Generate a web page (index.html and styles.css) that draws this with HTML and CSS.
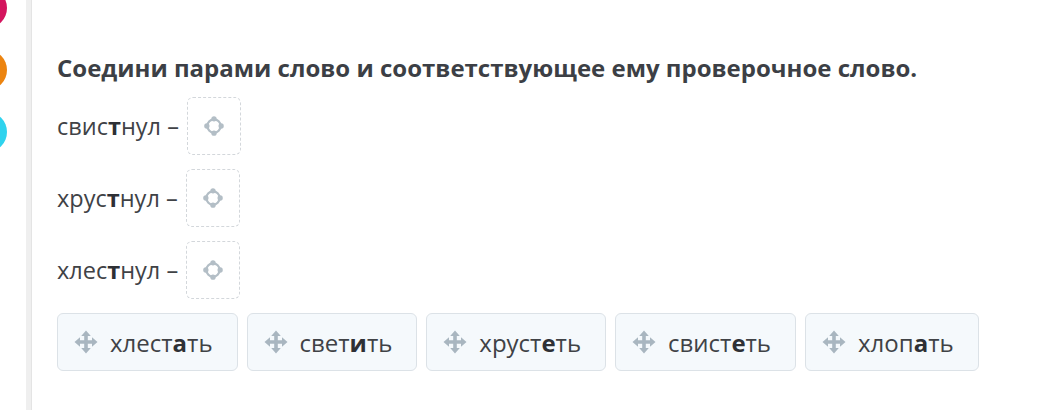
FILE: index.html
```html
<!DOCTYPE html>
<html lang="ru">
<head>
<meta charset="utf-8">
<link rel="stylesheet" href="styles.css">
</head>
<body>
<div class="page">
  <aside class="rail">
    <span class="dot dot-pink"></span>
    <span class="dot dot-orange"></span>
    <span class="dot dot-cyan"></span>
  </aside>
  <main class="content">
    <h1 class="title">Соедини парами слово и соответствующее ему проверочное слово.</h1>
    <div class="rows">
      <div class="row"><span class="word">свис<b>т</b>нул –</span><div class="drop"><svg class="target" viewBox="0 0 20 20"><circle cx="10" cy="10" r="6" /><circle class="knob" cx="10" cy="3.5" r="2.4"/><circle class="knob" cx="10" cy="16.5" r="2.4"/><circle class="knob" cx="3.5" cy="10" r="2.4"/><circle class="knob" cx="16.5" cy="10" r="2.4"/></svg></div></div>
      <div class="row"><span class="word">хрус<b>т</b>нул –</span><div class="drop"><svg class="target" viewBox="0 0 20 20"><circle cx="10" cy="10" r="6" /><circle class="knob" cx="10" cy="3.5" r="2.4"/><circle class="knob" cx="10" cy="16.5" r="2.4"/><circle class="knob" cx="3.5" cy="10" r="2.4"/><circle class="knob" cx="16.5" cy="10" r="2.4"/></svg></div></div>
      <div class="row"><span class="word">хлес<b>т</b>нул –</span><div class="drop"><svg class="target" viewBox="0 0 20 20"><circle cx="10" cy="10" r="6" /><circle class="knob" cx="10" cy="3.5" r="2.4"/><circle class="knob" cx="10" cy="16.5" r="2.4"/><circle class="knob" cx="3.5" cy="10" r="2.4"/><circle class="knob" cx="16.5" cy="10" r="2.4"/></svg></div></div>
    </div>
    <div class="options">
      <div class="card"><svg class="move" viewBox="0 0 24 24"><path d="M12 0.5 L16.8 6 H13.8 V10.2 H18 V7.2 L23.5 12 L18 16.8 V13.8 H13.8 V18 H16.8 L12 23.5 L7.2 18 H10.2 V13.8 H6 V16.8 L0.5 12 L6 7.2 V10.2 H10.2 V6 H7.2 Z"/></svg><span>хлест<b>а</b>ть</span></div>
      <div class="card"><svg class="move" viewBox="0 0 24 24"><path d="M12 0.5 L16.8 6 H13.8 V10.2 H18 V7.2 L23.5 12 L18 16.8 V13.8 H13.8 V18 H16.8 L12 23.5 L7.2 18 H10.2 V13.8 H6 V16.8 L0.5 12 L6 7.2 V10.2 H10.2 V6 H7.2 Z"/></svg><span>свет<b>и</b>ть</span></div>
      <div class="card"><svg class="move" viewBox="0 0 24 24"><path d="M12 0.5 L16.8 6 H13.8 V10.2 H18 V7.2 L23.5 12 L18 16.8 V13.8 H13.8 V18 H16.8 L12 23.5 L7.2 18 H10.2 V13.8 H6 V16.8 L0.5 12 L6 7.2 V10.2 H10.2 V6 H7.2 Z"/></svg><span>хруст<b>е</b>ть</span></div>
      <div class="card"><svg class="move" viewBox="0 0 24 24"><path d="M12 0.5 L16.8 6 H13.8 V10.2 H18 V7.2 L23.5 12 L18 16.8 V13.8 H13.8 V18 H16.8 L12 23.5 L7.2 18 H10.2 V13.8 H6 V16.8 L0.5 12 L6 7.2 V10.2 H10.2 V6 H7.2 Z"/></svg><span>свист<b>е</b>ть</span></div>
      <div class="card"><svg class="move" viewBox="0 0 24 24"><path d="M12 0.5 L16.8 6 H13.8 V10.2 H18 V7.2 L23.5 12 L18 16.8 V13.8 H13.8 V18 H16.8 L12 23.5 L7.2 18 H10.2 V13.8 H6 V16.8 L0.5 12 L6 7.2 V10.2 H10.2 V6 H7.2 Z"/></svg><span>хлоп<b>а</b>ть</span></div>
    </div>
  </main>
</div>
</body>
</html>
```

FILE: styles.css
```css
html, body {
  margin: 0;
  padding: 0;
  background: #ffffff;
}
body {
  font-family: "Open Sans", "Noto Sans", sans-serif;
  color: #3f4248;
  overflow: hidden;
}
.page {
  display: flex;
  height: 410px;
}
.rail {
  width: 26px;
  flex: none;
  display: flex;
  flex-direction: column;
  gap: 22px;
  margin-top: -12px;
  overflow: hidden;
}
.dot {
  display: block;
  width: 40px;
  height: 40px;
  border-radius: 50%;
  margin-left: -33px;
  flex: none;
}
.dot-pink { background: #d4155e; }
.dot-orange { background: #ec8410; }
.dot-cyan { background: #2fd3ee; }
.content {
  flex: 1;
  border-left: 5px solid #efefef;
  box-shadow: inset 1px 0 0 #e4e4e4;
  padding-left: 26px;
  padding-top: 51px;
}
.title {
  margin: 0;
  font-size: 24px;
  font-weight: 700;
  line-height: 34px;
  color: #3c3f45;
}
.rows {
  display: flex;
  flex-direction: column;
  gap: 14px;
  margin-top: 12px;
}
.row {
  display: flex;
  align-items: center;
  gap: 8px;
}
.word {
  font-size: 23.5px;
  color: #404246;
}
.word b, .card b {
  font-weight: 700;
  color: #2e3035;
}
.drop {
  width: 54px;
  height: 58px;
  box-sizing: border-box;
  border: 1px dashed #d3d7db;
  border-radius: 6px;
  display: flex;
  align-items: center;
  justify-content: center;
}
.target {
  width: 22px;
  height: 22px;
}
.target circle {
  fill: none;
  stroke: #b3bec6;
  stroke-width: 2;
}
.target circle.knob {
  fill: #b3bec6;
  stroke: none;
}
.options {
  display: flex;
  gap: 9px;
  margin-top: 14px;
}
.card {
  height: 58px;
  box-sizing: border-box;
  background: #f5f9fc;
  border: 1px solid #dce2e7;
  border-radius: 6px;
  display: flex;
  align-items: center;
  gap: 12px;
  padding: 0 24px 0 16px;
  font-size: 24px;
  color: #404246;
}
.move {
  width: 24px;
  height: 24px;
  fill: #a9b6c0;
}
```
